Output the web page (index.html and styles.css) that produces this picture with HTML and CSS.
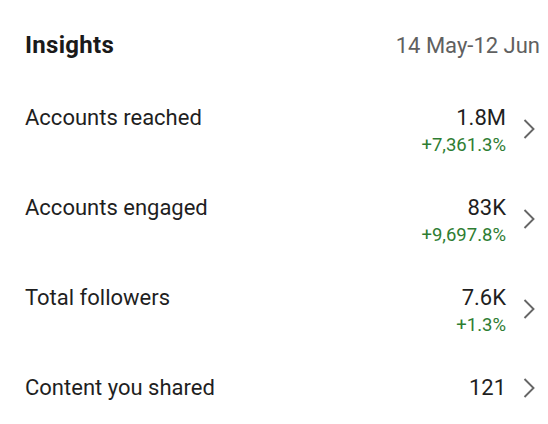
FILE: index.html
```html
<!DOCTYPE html>
<html>
<head>
<meta charset="utf-8">
<link rel="stylesheet" href="styles.css">
</head>
<body>
<div class="panel">
  <div class="header">
    <div class="title">Insights</div>
    <div class="date">14 May-12 Jun</div>
  </div>
  <div class="row">
    <div class="label">Accounts reached</div>
    <div class="right">
      <div class="nums"><div class="val">1.8M</div><div class="pct">+7,361.3%</div></div>
      <svg class="chev" width="12" height="20" viewBox="0 0 12 20"><path d="M1.5 1 L10.5 10 L1.5 19" fill="none" stroke="#666" stroke-width="1.9"/></svg>
    </div>
  </div>
  <div class="row">
    <div class="label">Accounts engaged</div>
    <div class="right">
      <div class="nums"><div class="val">83K</div><div class="pct">+9,697.8%</div></div>
      <svg class="chev" width="12" height="20" viewBox="0 0 12 20"><path d="M1.5 1 L10.5 10 L1.5 19" fill="none" stroke="#666" stroke-width="1.9"/></svg>
    </div>
  </div>
  <div class="row">
    <div class="label">Total followers</div>
    <div class="right">
      <div class="nums"><div class="val">7.6K</div><div class="pct">+1.3%</div></div>
      <svg class="chev" width="12" height="20" viewBox="0 0 12 20"><path d="M1.5 1 L10.5 10 L1.5 19" fill="none" stroke="#666" stroke-width="1.9"/></svg>
    </div>
  </div>
  <div class="row last">
    <div class="label">Content you shared</div>
    <div class="right">
      <div class="nums"><div class="val">121</div></div>
      <svg class="chev" width="12" height="20" viewBox="0 0 12 20"><path d="M1.5 1 L10.5 10 L1.5 19" fill="none" stroke="#666" stroke-width="1.9"/></svg>
    </div>
  </div>
</div>
</body>
</html>
```
FILE: styles.css
```css
html, body {
  margin: 0;
  padding: 0;
  background: #ffffff;
}
body {
  font-family: Roboto, "Noto Sans", sans-serif;
  color: #1f1f1f;
}
.panel {
  padding: 30px 13px 0 25px;
}
.header {
  display: flex;
  justify-content: space-between;
  align-items: baseline;
  height: 75px;
}
.title {
  font-size: 24px;
  font-weight: 700;
  line-height: 30px;
  letter-spacing: 0.3px;
  color: #1a1a1a;
}
.date {
  font-size: 22px;
  line-height: 30px;
  color: #606060;
  margin-right: -5px;
}
.row {
  display: flex;
  align-items: flex-start;
  height: 90px;
}
.row.last {
  height: auto;
}
.label {
  flex: 1;
  font-size: 22px;
  line-height: 26px;
  color: #1f1f1f;
}
.right {
  display: flex;
  align-items: center;
  gap: 17px;
}
.nums {
  display: flex;
  flex-direction: column;
  align-items: flex-end;
}
.val {
  font-size: 22px;
  line-height: 26px;
  color: #1f1f1f;
}
.pct {
  font-size: 18.5px;
  line-height: 29px;
  color: #2e7d32;
}
.chev {
  display: block;
  margin-bottom: 7px;
}
.row.last .chev {
  margin-bottom: 0;
}
```
